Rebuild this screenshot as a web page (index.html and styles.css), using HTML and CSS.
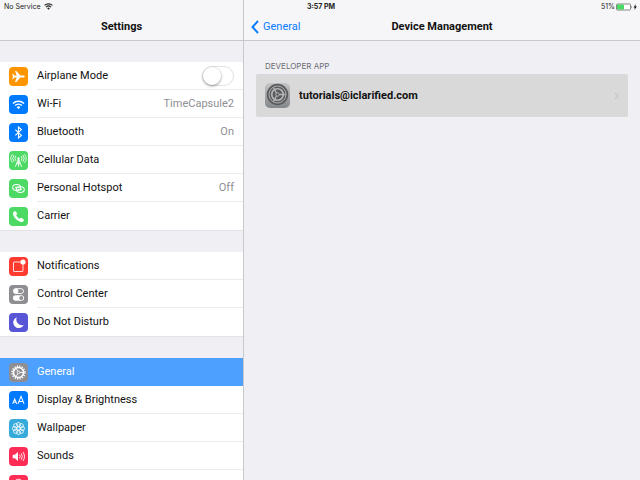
FILE: index.html
```html
<!DOCTYPE html>
<html lang="en">
<head>
<meta charset="utf-8">
<meta name="viewport" content="width=device-width, initial-scale=1">
<title>Settings</title>
<link rel="stylesheet" href="styles.css">
</head>
<body>
<div class="status">
  <div class="status-left">
    <span>No Service</span>
    <svg class="status-wifi" viewBox="0 0 16 12" aria-hidden="true"><path d="M1 4.2a10 10 0 0 1 14 0M3.6 7a6.3 6.3 0 0 1 8.800 0" fill="none" stroke="#222" stroke-width="1.9"/><path d="M5.6 9.1a3.5 3.5 0 0 1 4.800 0L8 11.6z" fill="#222"/></svg>
  </div>
  <div class="status-time">3:57 PM</div>
  <div class="status-right">
    <span>51%</span>
    <svg class="battery" viewBox="0 0 22 8" aria-hidden="true"><rect x=".5" y="1" width="14" height="6" rx="1" fill="#fff" stroke="#555" stroke-width=".7"/><rect x="1" y="1.5" width="7" height="5" fill="#4cd964"/><path d="M15.3 2.8q1.2 1.2 0 2.4z" fill="#333"/><path d="M19.8 1 17.5 4.4h1.400L18.4 7l2.5-3.5h-1.5z" fill="#111"/></svg>
  </div>
</div>

<div class="app">
  <aside class="sidebar">
    <header class="bar"><h1>Settings</h1></header>
    <nav class="menu" aria-label="Settings">
      <ul class="group">
        <li><label class="row">
          <svg class="icon orange" viewBox="0 0 36 36" aria-hidden="true"><path d="M30 18c0-1.300-1.500-2-3.500-2h-5L14 7.500h-2.500L14.500 16H10l-2.500-3H6l1.500 5L6 23h1.500l2.500-3h4.500l-3 8.500H14l7.500-8.500h5c2 0 3.500-.7 3.500-2z" fill="#fff"/></svg>
          <span class="cell"><span class="name">Airplane Mode</span><input class="switch" type="checkbox" role="switch"></span>
        </label></li>
        <li><a class="row" href="#wifi">
          <svg class="icon blue" viewBox="0 0 36 36" aria-hidden="true"><path d="M7.500 16a15 15 0 0 1 21 0M11.500 20a9.300 9.300 0 0 1 13 0" fill="none" stroke="#fff" stroke-width="2.700"/><path d="M14.500 23a5 5 0 0 1 7 0L18 26.700z" fill="#fff"/></svg>
          <span class="cell"><span class="name">Wi-Fi</span><span class="value">TimeCapsule2</span></span>
        </a></li>
        <li><a class="row" href="#bluetooth">
          <svg class="icon blue" viewBox="0 0 36 36" aria-hidden="true"><path d="m12 12.500 11.500 11-5.500 5v-21l5.500 5-11.500 11" fill="none" stroke="#fff" stroke-width="2.200"/></svg>
          <span class="cell"><span class="name">Bluetooth</span><span class="value">On</span></span>
        </a></li>
        <li><a class="row" href="#cellular">
          <svg class="icon green" viewBox="0 0 36 36" aria-hidden="true"><g fill="none" stroke="#fff" stroke-width="1.600"><path d="m12 30 6-16 6 16M14 25.500l6.500-4M22 25.500l-6.500-4M18 15v15"/><path d="M13 9.500a7 7 0 0 0 0 9M9.800 7.500a10 10 0 0 0 0 13M6.500 6a13 13 0 0 0 0 16M23 9.500a7 7 0 0 1 0 9M26.200 7.500a10 10 0 0 1 0 13M29.500 6a13 13 0 0 1 0 16"/></g><circle cx="18" cy="14" r="2.200" fill="#fff"/></svg>
          <span class="cell"><span class="name">Cellular Data</span></span>
        </a></li>
        <li><a class="row" href="#hotspot">
          <svg class="icon green" viewBox="0 0 36 36" aria-hidden="true"><g fill="none" stroke="#fff" stroke-width="2"><ellipse cx="14.500" cy="16" rx="7.500" ry="5.500"/><ellipse cx="21.500" cy="20" rx="7.500" ry="5.500"/><path d="M12 17.500c0-3 6-3 7-.5M24 18.500c0 3-6 3-7 .5"/></g></svg>
          <span class="cell"><span class="name">Personal Hotspot</span><span class="value">Off</span></span>
        </a></li>
        <li><a class="row" href="#carrier">
          <svg class="icon green" viewBox="0 0 36 36" aria-hidden="true"><path d="M11.500 7.500c-2 .6-4 2.500-4 4.500 0 7 9.500 16.500 16.500 16.500 2 0 4-2 4.500-4 .1-.6-4.500-4.200-5.500-4.200-.9 0-1.900 2-2.700 2-1.400 0-6.600-5.200-6.600-6.600 0-.8 2-1.800 2-2.700 0-1-3.600-5.600-4.200-5.500z" fill="#fff"/></svg>
          <span class="cell"><span class="name">Carrier</span></span>
        </a></li>
      </ul>
      <ul class="group">
        <li><a class="row" href="#notifications">
          <svg class="icon red" viewBox="0 0 36 36" aria-hidden="true"><path d="M21 9.500H9.500a1 1 0 0 0-1 1v16a1 1 0 0 0 1 1h16a1 1 0 0 0 1-1V15" fill="none" stroke="#fff" stroke-width="1.600"/><circle cx="26.500" cy="9.500" r="5" fill="#fff"/></svg>
          <span class="cell"><span class="name">Notifications</span></span>
        </a></li>
        <li><a class="row" href="#control">
          <svg class="icon gray" viewBox="0 0 36 36" aria-hidden="true"><rect x="8.500" y="7" width="19" height="9" rx="4.500" fill="none" stroke="#fff" stroke-width="1.800"/><circle cx="13" cy="11.500" r="4.800" fill="#fff"/><rect x="7.500" y="19.500" width="21" height="10.500" rx="5.250" fill="#fff"/><circle cx="23.200" cy="24.750" r="3.700" fill="#8e8e93"/></svg>
          <span class="cell"><span class="name">Control Center</span></span>
        </a></li>
        <li><a class="row" href="#dnd">
          <svg class="icon purple" viewBox="0 0 36 36" aria-hidden="true"><path d="M15 8a10.500 10.500 0 1 0 13 14.500A10.500 10.500 0 0 1 15 8z" fill="#fff"/></svg>
          <span class="cell"><span class="name">Do Not Disturb</span></span>
        </a></li>
      </ul>
      <ul class="group">
        <li><a class="row selected" href="#general" aria-current="page">
          <svg class="icon gray" viewBox="0 0 36 36" aria-hidden="true"><g fill="none" stroke="#fff"><circle cx="18" cy="18" r="12" stroke-width="3" stroke-dasharray="2.400 2.312"/><circle cx="18" cy="18" r="9.500" stroke-width="2.800"/><circle cx="18" cy="18" r="2.500" stroke-width="1.500"/><path d="M20.500 18h7M16.700 15.800l-3.500-6M16.700 20.200l-3.500 6" stroke-width="1.700"/></g></svg>
          <span class="cell"><span class="name">General</span></span>
        </a></li>
        <li><a class="row" href="#display">
          <svg class="icon blue" viewBox="0 0 36 36" aria-hidden="true"><path d="m7 24.500 3.800-9.500 3.800 9.500M8.500 21.500h4.600M17 24.500 22.800 10l5.800 14.500M19 19.800h7.600" fill="none" stroke="#fff" stroke-width="1.900"/></svg>
          <span class="cell"><span class="name">Display &amp; Brightness</span></span>
        </a></li>
        <li><a class="row" href="#wallpaper">
          <svg class="icon cyan" viewBox="0 0 36 36" aria-hidden="true"><g fill="none" stroke="#fff" stroke-width="1.500"><circle cx="18" cy="10.500" r="4"/><circle cx="23.300" cy="12.700" r="4"/><circle cx="25.500" cy="18" r="4"/><circle cx="23.300" cy="23.300" r="4"/><circle cx="18" cy="25.500" r="4"/><circle cx="12.700" cy="23.300" r="4"/><circle cx="10.500" cy="18" r="4"/><circle cx="12.700" cy="12.700" r="4"/><circle cx="18" cy="18" r="3"/></g></svg>
          <span class="cell"><span class="name">Wallpaper</span></span>
        </a></li>
        <li><a class="row" href="#sounds">
          <svg class="icon pink" viewBox="0 0 36 36" aria-hidden="true"><path d="M7 14.500h4l6-5v17l-6-5H7z" fill="#fff"/><path d="M20 14.500q2.500 3.500 0 7M23.200 12q4.200 6 0 12M26.400 9.500q6 8.500 0 17" fill="none" stroke="#fff" stroke-width="1.700"/></svg>
          <span class="cell"><span class="name">Sounds</span></span>
        </a></li>
        <li><a class="row" href="#passcode" aria-label="Passcode">
          <svg class="icon pink" viewBox="0 0 36 36" aria-hidden="true"><path d="M9 25V17a9 9 0 0 1 18 0v9M13 28V17a5 5 0 0 1 10 0v11M18 16v13" fill="none" stroke="#fff" stroke-width="1.700"/></svg>
        </a></li>
      </ul>
    </nav>
  </aside>

  <main class="detail">
    <header class="bar detail-bar">
      <a class="back" href="#general"><svg class="chevron" viewBox="0 0 8 14" aria-hidden="true"><path d="M7 1 1.500 7 7 13" fill="none" stroke="#087cff" stroke-width="2"/></svg>General</a>
      <h2>Device Management</h2>
    </header>
    <section class="profiles">
      <h3>DEVELOPER APP</h3>
      <a class="profile" href="#profile">
        <svg class="profile-icon" viewBox="0 0 50 50" aria-hidden="true">
          <defs><linearGradient id="metal" x2="0" y2="1"><stop stop-color="#c3c4c5"/><stop offset="1" stop-color="#84878b"/></linearGradient></defs>
          <rect width="50" height="50" rx="10" fill="url(#metal)"/>
          <circle cx="25" cy="23" r="21.500" fill="#5a5b5c"/>
          <g fill="none" stroke="#b4b5b6"><circle cx="25" cy="23" r="17" stroke-width="2"/><circle cx="25" cy="23" r="11.500" stroke-width="3.400"/><circle cx="25" cy="23" r="3.500" stroke-width="2"/><path d="M28.500 23H41M23 20l-6-11M23 26l-6 11" stroke-width="2.800"/></g>
        </svg>
        <span class="profile-name">tutorials@iclarified.com</span>
        <svg class="disclosure" viewBox="0 0 5 8" aria-hidden="true"><path d="m1 1 3 3-3 3" fill="none" stroke="#bdbdc0"/></svg>
      </a>
    </section>
  </main>
</div>
</body>
</html>
```
FILE: styles.css
```css
* {
  box-sizing: border-box;
}

body {
  margin: 0;
  font-family: Roboto, "Liberation Sans", sans-serif;
  font-size: 11px;
  line-height: 16px;
  color: #111;
  background: #efeff4;
}

h1, h2, h3, ul {
  margin: 0;
  padding: 0;
}

ul {
  list-style: none;
}

a {
  color: inherit;
  text-decoration: none;
}

svg {
  display: block;
  flex: none;
}

.status {
  position: absolute;
  top: 0;
  left: 0;
  right: 0;
  z-index: 1;
  display: grid;
  grid-template-columns: 1fr auto 1fr;
  align-items: center;
  padding: 0 2px 0 4px;
  font-family: Inter, "Liberation Sans", sans-serif;
  font-size: 7px;
  line-height: 13px;
  color: #222;
}

.status-left,
.status-right {
  display: flex;
  align-items: center;
  gap: 4px;
}

.status-right {
  justify-content: flex-end;
  gap: 1px;
}

.status-time {
  font-weight: 700;
}

.status-wifi {
  width: 9px;
  height: 7px;
}

.battery {
  width: 22px;
  height: 8px;
}

.app {
  display: grid;
  grid-template-columns: 38.125% 1fr;
  height: 100vh;
  overflow: hidden;
}

.sidebar {
  min-width: 0;
  border-right: 1px solid #c8c7cc;
}

.bar {
  height: 41px;
  padding-top: 14px;
  border-bottom: 1px solid #c8c7cc;
  background: #f6f6f8;
  display: grid;
  align-items: center;
  text-align: center;
}

h1, h2 {
  font-size: 11px;
  font-weight: 700;
}

.menu {
  display: grid;
  gap: 22px;
  padding-top: 21px;
}

.group {
  background: #fff;
  box-shadow: 0 1px #e2e2e7;
}

.row {
  display: flex;
  align-items: center;
  gap: 9px;
  height: 28px;
  padding-left: 9px;
}

.cell {
  flex: 1;
  display: flex;
  align-items: center;
  justify-content: space-between;
  height: 28px;
  padding-top: 1px;
  padding-right: 9px;
  border-bottom: 1px solid #ebebed;
}

li:last-child .cell,
.selected .cell {
  border-bottom-color: transparent;
}

.value {
  color: #8e8e93;
}

.selected {
  background: #4da0ff;
  color: #fff;
}

.icon {
  width: 19px;
  height: 19px;
  border-radius: 4px;
}

.orange { background: #ff9500; }
.blue { background: #007aff; }
.green { background: #4cd964; }
.red { background: #ff3b30; }
.gray { background: #8e8e93; }
.purple { background: #5856d6; }
.cyan { background: #36aada; }
.pink { background: #ff2d55; }

.switch {
  appearance: none;
  width: 32px;
  height: 20px;
  margin: 0;
  border: 1px solid #e2e2e4;
  border-radius: 10px;
  background: #fff;
}

.switch::before {
  content: "";
  display: block;
  width: 18px;
  height: 18px;
  border-radius: 50%;
  background: #fff;
  box-shadow: 0 1px 3px rgba(0, 0, 0, 0.4);
}

.switch:checked {
  background: #4cd964;
}

.switch:checked::before {
  margin-left: auto;
}

.detail-bar {
  grid-template-columns: 1fr auto 1fr;
  padding-left: 7px;
  padding-right: 7px;
}

.back {
  display: flex;
  align-items: center;
  gap: 4px;
  color: #087cff;
}

.chevron {
  width: 8px;
  height: 14px;
}

.profiles {
  padding: 17px 12px;
}

h3 {
  padding: 0 9px;
  font-family: Inter, "Liberation Sans", sans-serif;
  font-size: 8px;
  font-weight: 400;
  color: #6d6d72;
}

.profile {
  display: flex;
  align-items: center;
  gap: 9px;
  height: 43px;
  padding: 0 9px;
  border-radius: 2px;
  background: #d9d9d9;
}

.profile-icon {
  width: 25px;
  height: 25px;
}

.profile-name {
  flex: 1;
  font-weight: 700;
}

.disclosure {
  width: 5px;
  height: 8px;
}
```
